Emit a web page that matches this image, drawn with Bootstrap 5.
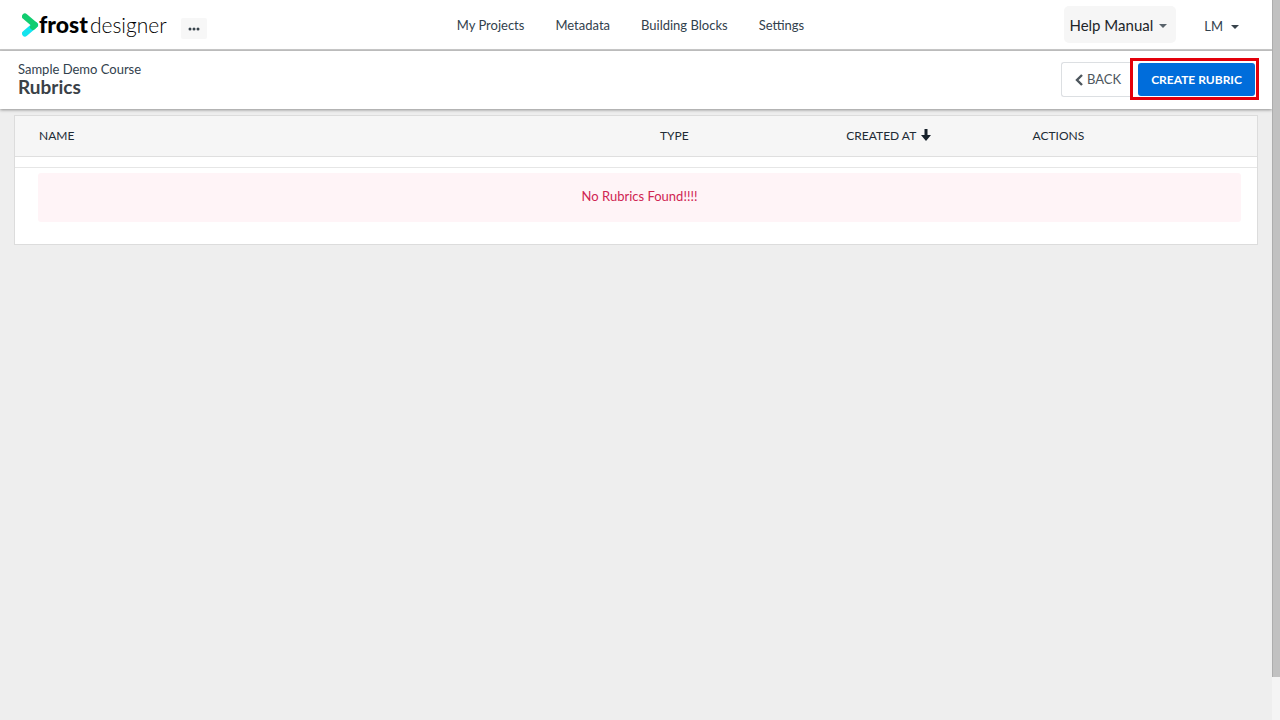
<!DOCTYPE html>
<html lang="en">
<head>
<meta charset="utf-8">
<meta name="viewport" content="width=device-width, initial-scale=1">
<title>Rubrics - Frost Designer</title>
<link href="https://cdn.jsdelivr.net/npm/bootstrap@5.3.0/dist/css/bootstrap.min.css" rel="stylesheet">
<style>
  body { font-family: Lato, sans-serif; font-size: 13px; line-height: 20px; color: #32414d; background: #eee; padding-right: 8px; }
  .scroll-track { width: 8px; background: #f4f4f4; }
  .scroll-thumb { height: 94%; background: #c1c1c1; border-left: 1px solid #adadad; }
  .topbar { height: 51px; padding: 0 33px 0 22px; border-bottom: 2px solid #c9c9c9; display: grid; grid-template-columns: 1fr auto 1fr; }
  .brand { color: #000; line-height: 28px; }
  .brand-strong { font-size: 23px; font-weight: 900; }
  .brand-thin { font-size: 21px; font-weight: 300; margin-left: 2px; }
  .more-btn { width: 26px; height: 21px; margin-left: 14px; background: #f7f7f7; border-radius: 2px; }
  .main-links { gap: 31px; }
  .main-links a, .user-btn { color: #32414d; }
  .help-btn { height: 37px; padding: 2px 9px 0 5px; font-size: 15px; gap: 6px; background: #f6f6f6; border-radius: 5px; color: #212529; }
  .user-btn { padding: 4px 0 0; margin-left: 28px; font-size: 13px; }
  .caret { width: 8px; height: 4px; }
  .titlebar { height: 58px; padding: 0 13px 2px 18px; box-shadow: 0 1px 3px rgba(0,0,0,.4); }
  .course { font-size: 13px; line-height: 16px; }
  .page-title { font-size: 19px; line-height: 20px; color: #3a4147; }
  .back-btn { height: 35px; width: 69px; padding: 2px 0 0 13px; font-size: 13px; color: #4d565d; background: #fff; border: 1px solid #dcdfe2; border-right: 0; border-radius: 3px 0 0 3px; }
  .highlight { border: 3px solid #e3000b; padding: 2px 1px 1px 5px; }
  .create-btn { height: 33px; width: 117px; padding: 0; font-size: 12px; color: #fff; background: #006ddb; border-radius: 3px; }
  .create-btn:hover { background: #005fc0; color: #fff; }
  .content-area { padding: 6px 14px; }
  .panel { background: #fff; border: 1px solid #dcdcdc; padding-bottom: 22px; }
  .rubrics { table-layout: fixed; }
  .rubrics th { height: 40px; padding: 0 0 0 24px; font-size: 12px; font-weight: 400; color: #212b35; background: #f6f6f6; border-bottom: 1px solid #dfdfdf; }
  .rubrics th svg { margin: -3px 0 0 5px; }
  .spacer-row { height: 11px; border-bottom: 1px solid #e6e6e6; }
  .empty-note { height: 49px; margin: 5px 16px 0 23px; padding-bottom: 2px; border-radius: 3px; background: #fff4f7; color: #cf2552; }
</style>
</head>
<body>
<header class="topbar bg-white align-items-center">
  <div class="d-flex align-items-center">
    <a href="#" class="brand d-flex align-items-center text-decoration-none">
      <svg width="17" height="24" viewBox="0 0 17 24" fill="none" stroke-width="6" stroke-linecap="round" stroke-linejoin="round" aria-hidden="true">
        <path d="M3 20.500 13 12" stroke="#13e4ee"/>
        <path d="M3 3.500 13 12 11 14" stroke="#12cd70"/>
      </svg>
      <span class="d-flex align-items-baseline"><span class="brand-strong">frost</span><span class="brand-thin">designer</span></span>
    </a>
    <button type="button" class="btn more-btn border-0 p-0 mt-2 d-flex align-items-center justify-content-center" aria-label="More">
      <svg width="12" height="4" viewBox="0 0 12 4" fill="#38434c"><circle cx="2" cy="2" r="1.500"/><circle cx="6" cy="2" r="1.500"/><circle cx="10" cy="2" r="1.500"/></svg>
    </button>
  </div>
  <nav class="main-links d-flex">
    <a href="#" class="text-decoration-none">My Projects</a>
    <a href="#" class="text-decoration-none">Metadata</a>
    <a href="#" class="text-decoration-none">Building Blocks</a>
    <a href="#" class="text-decoration-none">Settings</a>
  </nav>
  <div class="d-flex align-items-center justify-content-end">
    <button type="button" class="btn help-btn border-0 d-flex align-items-center">Help Manual
      <svg class="caret" viewBox="0 0 8 4" fill="#59636b" aria-hidden="true"><path d="M0 0h8L4 4z"/></svg></button>
    <button type="button" class="btn user-btn border-0 d-flex align-items-center gap-2">LM
      <svg class="caret" viewBox="0 0 8 4" fill="#38434c" aria-hidden="true"><path d="M0 0h8L4 4z"/></svg></button>
  </div>
</header>

<section class="titlebar bg-white d-flex align-items-center justify-content-between">
  <div>
    <div class="course">Sample Demo Course</div>
    <h1 class="page-title fw-bold mb-0">Rubrics</h1>
  </div>
  <div class="d-flex align-items-center">
    <button type="button" class="btn back-btn d-flex align-items-center gap-1">
      <svg width="8" height="12" viewBox="0 0 8 12" fill="none" stroke="#4d565d" stroke-width="2.400" aria-hidden="true"><path d="M7 1 2 6l5 5"/></svg>BACK</button>
    <div class="highlight"><button type="button" class="btn create-btn border-0 fw-bold d-block">CREATE RUBRIC</button></div>
  </div>
</section>

<main class="content-area">
  <div class="panel">
    <table class="rubrics w-100">
      <colgroup><col style="width:50%"><col style="width:15%"><col style="width:15%"><col style="width:20%"></colgroup>
      <thead>
        <tr>
          <th scope="col">NAME</th>
          <th scope="col">TYPE</th>
          <th scope="col">CREATED AT<svg width="10" height="12" viewBox="0 0 10 12" fill="#17212b" aria-hidden="true"><path d="M3.500 0h3v6H10L5 12 0 6h3.500z"/></svg></th>
          <th scope="col">ACTIONS</th>
        </tr>
      </thead>
    </table>
    <div class="spacer-row"></div>
    <div class="empty-note d-flex align-items-center justify-content-center">No Rubrics Found!!!!</div>
  </div>
</main>

<div class="scroll-track position-fixed top-0 end-0 bottom-0" aria-hidden="true"><div class="scroll-thumb"></div></div>
<script src="https://cdn.jsdelivr.net/npm/bootstrap@5.3.0/dist/js/bootstrap.bundle.min.js"></script>
</body>
</html>
